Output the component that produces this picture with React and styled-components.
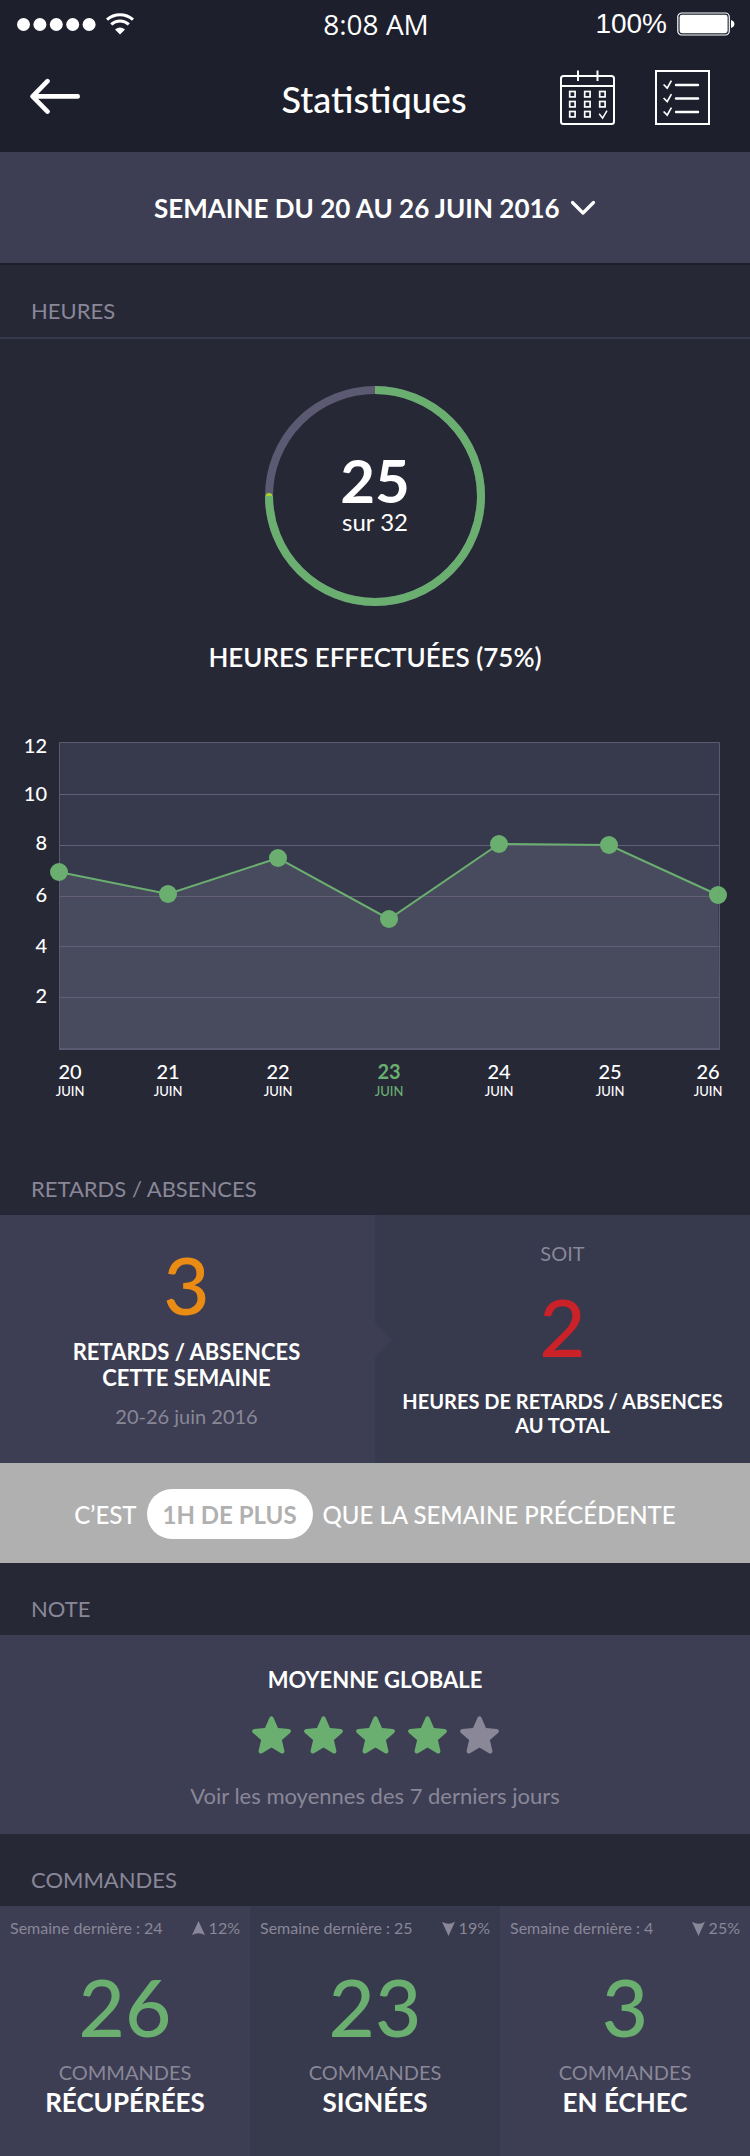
import React from "react";
import styled, { createGlobalStyle, css } from "styled-components";

const color = {
  header: "#1d202c",
  page: "#262836",
  panel: "#3d3e53",
  panelAlt: "#37394c",
  line: "#36384d",
  muted: "#898798",
  green: "#6aaf70",
  orange: "#ea8b13",
  red: "#cb2128",
  band: "#b0b0b0",
  track: "#5c5972",
  grid: "#5c5a72",
};

const GlobalStyle = createGlobalStyle`
  *, *::before, *::after { box-sizing: border-box; }
  body {
    margin: 0;
    background: ${color.page};
    color: #fff;
    font-family: Lato, "Liberation Sans", sans-serif;
  }
  h1, h2, p { margin: 0; font-weight: inherit; }
`;

const Page = styled.div`
  width: 100%;
  background: ${color.page};
`;

const Header = styled.header`
  background: ${color.header};
  padding-bottom: 4px;
`;

const StatusBar = styled.div`
  display: grid;
  grid-template-columns: 1fr auto 1fr;
  align-items: center;
  height: 48px;
  padding: 0 15px 0 17px;
`;

const StatusGroup = styled.div`
  display: flex;
  align-items: center;
  gap: 10px;
  justify-content: ${(p) => (p.$end ? "flex-end" : "flex-start")};
  font: 400 28px/32px "Liberation Sans", sans-serif;
`;

const Clock = styled.time`
  font: 500 28px/32px "Open Sans", "Liberation Sans", sans-serif;
`;

const NavBar = styled.nav`
  display: grid;
  grid-template-columns: 1fr auto 1fr;
  align-items: center;
  height: 100px;
  padding: 0 40px 0 30px;
`;

const Title = styled.h1`
  font-size: 36px;
  line-height: 44px;
  font-weight: 500;
  padding: 2px 0 0 8px;
`;

const NavActions = styled.div`
  display: flex;
  justify-content: flex-end;
  gap: 40px;
`;

const IconButton = styled.button`
  display: flex;
  justify-self: start;
  padding: 0;
  border: 0;
  background: none;
  color: inherit;
  cursor: pointer;
`;

const WeekBar = styled.div`
  display: flex;
  justify-content: center;
  padding: 38px 20px 37px;
  background: ${color.panel};
  border-bottom: 2px solid ${color.header};
`;

const WeekPicker = styled.label`
  position: relative;
  display: flex;
  align-items: center;
`;

const WeekSelect = styled.select`
  appearance: none;
  margin: 0;
  padding: 0 34px 0 0;
  border: 0;
  background: none;
  color: #fff;
  font: 700 26px/36px Lato, "Liberation Sans", sans-serif;
  height: 36px;
  cursor: pointer;
`;

const Chevron = styled.svg`
  position: absolute;
  right: 0;
  pointer-events: none;
`;

const SectionTitle = styled.h2`
  padding: 33px 31px 13px;
  color: ${color.muted};
  font-size: 22px;
  line-height: 26px;
  ${(p) => p.$ruled && css`border-bottom: 2px solid ${color.line};`}
`;

const Hours = styled.div`
  display: flex;
  flex-direction: column;
  align-items: center;
  padding: 47px 0 33px;
`;

const Ring = styled.div`
  display: grid;
  place-items: center;
  & > * { grid-area: 1 / 1; }
`;

const RingText = styled.div`
  text-align: center;
  padding-bottom: 4px;
`;

const RingValue = styled.p`
  font-size: 60px;
  line-height: 56px;
  font-weight: 700;
`;

const RingTotal = styled.p`
  font-size: 24px;
  line-height: 28px;
`;

const HoursLabel = styled.p`
  margin: 35px 0 47px;
  font-size: 26px;
  line-height: 32px;
  font-weight: 600;
`;

const Chart = styled.svg`
  display: block;
  width: 100%;
  height: auto;
  font-family: Lato, "Liberation Sans", sans-serif;
`;

const AxisText = styled.text`
  fill: ${(p) => (p.$active ? color.green : "#fff")};
  font-size: ${(p) => (p.$small ? 13 : 20)}px;
  font-weight: ${(p) => (p.$active && !p.$small ? 700 : 500)};
  text-anchor: ${(p) => (p.$end ? "end" : "middle")};
`;

const Columns = styled.div`
  display: grid;
  grid-template-columns: repeat(${(p) => p.$count}, 1fr);
`;

const Panel = styled.div`
  position: relative;
  display: flex;
  flex-direction: column;
  align-items: center;
  text-align: center;
  padding: ${(p) => p.$pad};
  background: ${(p) => (p.$alt ? color.panelAlt : color.panel)};
`;

const PanelArrow = styled.svg`
  position: absolute;
  left: 0;
  top: 108px;
`;

const BigNumber = styled.p`
  margin: ${(p) => p.$margin || 0};
  color: ${(p) => p.$color};
  font-size: 80px;
  line-height: 80px;
  font-weight: 500;
`;

const Strong = styled.p`
  font-size: ${(p) => (p.$small ? 20 : 22)}px;
  line-height: ${(p) => (p.$small ? 24 : 26)}px;
  font-weight: 700;
`;

const Muted = styled.p`
  color: ${color.muted};
  font-size: 20px;
  line-height: 24px;
`;

const Period = styled(Muted)`
  margin-top: 13px;
`;

const Band = styled.div`
  display: flex;
  align-items: baseline;
  justify-content: center;
  gap: 10px;
  padding: 26px 0 24px;
  background: ${color.band};
  font-size: 24px;
  line-height: 28px;
  font-weight: 500;
`;

const Pill = styled.strong`
  padding: 12px 16px 10px;
  border-radius: 25px;
  background: #fff;
  color: ${color.band};
  font-weight: 700;
`;

const Stars = styled.div`
  display: flex;
  gap: 13px;
  margin: 23px 0 29px;
`;

const MutedLink = styled.a`
  color: ${color.muted};
  font-size: 22px;
  line-height: 26px;
  text-decoration: none;
`;

const Compare = styled.div`
  display: flex;
  align-self: stretch;
  justify-content: space-between;
  color: ${color.muted};
  font-size: 16px;
  line-height: 20px;
`;

const Trend = styled.span`
  display: flex;
  align-items: center;
  gap: 4px;
`;

const OrderState = styled.p`
  margin-top: 2px;
  font-size: 26px;
  line-height: 32px;
  font-weight: 700;
`;

const SignalIcon = () => (
  <svg width="79" height="13" viewBox="0 0 79 13" fill="#fff" aria-hidden="true">
    {[0, 1, 2, 3, 4].map((i) => (
      <circle key={i} cx={6.5 + i * 16.4} cy="6.5" r="6.5" />
    ))}
  </svg>
);

const WifiIcon = () => (
  <svg width="28" height="22" viewBox="0 0 28 22" fill="none" stroke="#fff" strokeWidth="3" aria-hidden="true">
    <path d="M1 6.6A19.5 19.5 0 0 1 27 6.6" />
    <path d="M5.2 11.4A13 13 0 0 1 22.8 11.4" />
    <path d="M9 16.4Q14 12.6 19 16.4L14 21.6Z" fill="#fff" stroke="none" />
  </svg>
);

const BatteryIcon = () => (
  <svg width="58" height="24" viewBox="0 0 58 24" aria-hidden="true">
    <rect x="0.8" y="1" width="51.5" height="22" rx="4" fill="none" stroke="#fff" strokeWidth="1.2" />
    <rect x="2.6" y="2.8" width="48" height="18.4" rx="2.4" fill="#fff" />
    <path d="M54 8q3.4 1.2 3.4 4t-3.4 4Z" fill="#fff" />
  </svg>
);

const BackIcon = () => (
  <svg width="50" height="40" viewBox="0 0 50 40" fill="none" stroke="#fff" strokeWidth="4.6" strokeLinecap="round" strokeLinejoin="round">
    <path d="M17.5 3.2L2.6 18.4L17.5 33.6M3 18.4H47.7" />
  </svg>
);

const CalendarIcon = () => (
  <svg width="55" height="56" viewBox="0 0 55 56" fill="none" stroke="#fff" strokeWidth="2">
    <rect x="1" y="6" width="53" height="48" rx="2.5" />
    <path d="M1 16H54M18 0.5V11M37.5 0.5V11" />
    {[21.5, 31.5, 41.5].map((y, row) =>
      [9.7, 24.7, 39.7].map((x, col) =>
        row === 2 && col === 2 ? null : <rect key={x + "-" + y} x={x} y={y} width="5.4" height="5.4" strokeWidth="1.7" />
      )
    )}
    <path d="M39.2 43.8l3.4 4.4 4.4-7.6" strokeWidth="1.5" />
  </svg>
);

const ChecklistIcon = () => (
  <svg width="55" height="55" viewBox="0 0 55 55" fill="none" stroke="#fff" strokeWidth="2">
    <rect x="1" y="1" width="53" height="53" />
    {[15, 28.5, 42].map((y) => (
      <g key={y}>
        <path d={`M8.6 ${y - 0.5}l3.6 3.6 4.2-7.4`} strokeWidth="1.7" />
        <path d={`M21 ${y}H43`} strokeWidth="2.4" strokeLinecap="round" />
      </g>
    ))}
  </svg>
);

const Star = ({ on }) => (
  <svg width="39" height="38" viewBox="0 0 39 38" fill={on ? color.green : color.muted} aria-hidden="true">
    <path d="M17.6 1.6Q19.5-.9 21.4 1.6L26 12L36.8 13Q40.4 14 38 17L29.9 24L32.5 35.2Q32 38.6 28.6 36.9L19.5 31.6L10.4 36.9Q7 38.6 6.5 35.2L9.1 24L1 17Q-1.4 14 2.2 13L13 12Z" />
  </svg>
);

const TrendArrow = ({ down }) => (
  <svg width="13" height="15" viewBox="0 0 13 15" fill={color.muted} aria-hidden="true">
    <path d={down ? "M6.5 15L13 .8Q6.5 4.6 0 .8Z" : "M6.5 0L13 14.2Q6.5 10.4 0 14.2Z"} />
  </svg>
);

const axis = [
  { label: "12", y: 33 },
  { label: "10", y: 81, line: 74.5 },
  { label: "8", y: 130, line: 125.5 },
  { label: "6", y: 182, line: 176.5 },
  { label: "4", y: 233, line: 226.5 },
  { label: "2", y: 283, line: 277.5 },
];

const days = [
  { day: "20", x: 59, y: 152, labelX: 70 },
  { day: "21", x: 168, y: 174, labelX: 168 },
  { day: "22", x: 278, y: 138, labelX: 278 },
  { day: "23", x: 389, y: 199, labelX: 389, active: true },
  { day: "24", x: 499, y: 124, labelX: 499 },
  { day: "25", x: 609, y: 125, labelX: 610 },
  { day: "26", x: 718, y: 175, labelX: 708 },
];

const HoursChart = () => {
  const points = days.map((d) => `${d.x},${d.y}`).join(" ");
  return (
    <Chart viewBox="0 0 750 390" role="img" aria-label="Heures par jour">
      <rect x="59.5" y="22.5" width="660" height="307" fill={color.panelAlt} />
      <polygon points={`59,330 ${points} 720,330`} fill="#484a5d" />
      {axis.filter((a) => a.line).map((a) => (
        <path key={a.label} d={`M60 ${a.line}H719`} stroke="#625f77" />
      ))}
      <path d="M59.5 330V22.5H719.5V330" fill="none" stroke={color.grid} />
      <path d="M59 329H720" stroke={color.grid} strokeWidth="2" />
      <polyline points={points} fill="none" stroke={color.green} strokeWidth="2" />
      {axis.map((a) => (
        <AxisText key={a.label} x="47" y={a.y} $end>{a.label}</AxisText>
      ))}
      {days.map((d) => (
        <g key={d.day}>
          <circle cx={d.x} cy={d.y} r="9" fill={color.green} />
          <AxisText x={d.labelX} y="359" $active={d.active}>{d.day}</AxisText>
          <AxisText x={d.labelX} y="376" $active={d.active} $small>JUIN</AxisText>
        </g>
      ))}
    </Chart>
  );
};

const orders = [
  { last: 24, trend: "12%", value: 26, state: "RÉCUPÉRÉES" },
  { last: 25, trend: "19%", down: true, value: 23, state: "SIGNÉES" },
  { last: 4, trend: "25%", down: true, value: 3, state: "EN ÉCHEC" },
];

export default function App() {
  return (
    <Page>
      <GlobalStyle />
      <Header>
        <StatusBar>
          <StatusGroup>
            <SignalIcon />
            <WifiIcon />
          </StatusGroup>
          <Clock>8:08 AM</Clock>
          <StatusGroup $end>
            100%
            <BatteryIcon />
          </StatusGroup>
        </StatusBar>
        <NavBar>
          <IconButton type="button" aria-label="Retour"><BackIcon /></IconButton>
          <Title>Statistiques</Title>
          <NavActions>
            <IconButton type="button" aria-label="Calendrier"><CalendarIcon /></IconButton>
            <IconButton type="button" aria-label="Liste"><ChecklistIcon /></IconButton>
          </NavActions>
        </NavBar>
      </Header>

      <WeekBar>
        <WeekPicker>
          <WeekSelect aria-label="Semaine">
            <option>SEMAINE DU 20 AU 26 JUIN 2016</option>
          </WeekSelect>
          <Chevron width="26" height="16" viewBox="0 0 26 16" fill="none" stroke="#fff" strokeWidth="3.2" strokeLinecap="round" strokeLinejoin="round">
            <path d="M2.5 2.5L13 13L23.5 2.5" />
          </Chevron>
        </WeekPicker>
      </WeekBar>

      <section>
        <SectionTitle $ruled>HEURES</SectionTitle>
        <Hours>
          <Ring>
            <svg width="220" height="220" viewBox="0 0 220 220" fill="none" strokeWidth="8" aria-hidden="true">
              <circle cx="110" cy="110" r="106" stroke={color.track} />
              <ellipse cx="4" cy="110" rx="3.4" ry="3" fill="#a3cf2f" />
              <path d="M110 4A106 106 0 1 1 4 110" stroke={color.green} />
            </svg>
            <RingText>
              <RingValue>25</RingValue>
              <RingTotal>sur 32</RingTotal>
            </RingText>
          </Ring>
          <HoursLabel>HEURES EFFECTUÉES (75%)</HoursLabel>
          <HoursChart />
        </Hours>
      </section>

      <section>
        <SectionTitle>RETARDS / ABSENCES</SectionTitle>
        <Columns $count={2}>
          <Panel $pad="29px 2px 35px 0">
            <BigNumber $color={color.orange} $margin="0 0 15px">3</BigNumber>
            <Strong>RETARDS / ABSENCES<br />CETTE SEMAINE</Strong>
            <Period>20-26 juin 2016</Period>
          </Panel>
          <Panel $alt $pad="26px 0">
            <PanelArrow width="17" height="34" viewBox="0 0 17 34" aria-hidden="true">
              <path d="M0 0L17 17L0 34Z" fill={color.panel} />
            </PanelArrow>
            <Muted>SOIT</Muted>
            <BigNumber $color={color.red} $margin="21px 0 23px">2</BigNumber>
            <Strong $small>HEURES DE RETARDS / ABSENCES<br />AU TOTAL</Strong>
          </Panel>
        </Columns>
        <Band>
          <span>C’EST</span>
          <Pill>1H DE PLUS</Pill>
          <span>QUE LA SEMAINE PRÉCÉDENTE</span>
        </Band>
      </section>

      <section>
        <SectionTitle>NOTE</SectionTitle>
        <Panel $pad="32px 0 25px">
          <Strong>MOYENNE GLOBALE</Strong>
          <Stars role="img" aria-label="4 sur 5">
            {[1, 2, 3, 4, 5].map((n) => <Star key={n} on={n <= 4} />)}
          </Stars>
          <MutedLink href="#moyennes">Voir les moyennes des 7 derniers jours</MutedLink>
        </Panel>
      </section>

      <section>
        <SectionTitle>COMMANDES</SectionTitle>
        <Columns $count={3}>
          {orders.map((o, i) => (
            <Panel key={o.state} $alt={i === 1} $pad="12px 10px 38px">
              <Compare>
                <span>Semaine dernière : {o.last}</span>
                <Trend><TrendArrow down={o.down} />{o.trend}</Trend>
              </Compare>
              <BigNumber $color={color.green} $margin="28px 0 14px">{o.value}</BigNumber>
              <Muted>COMMANDES</Muted>
              <OrderState>{o.state}</OrderState>
            </Panel>
          ))}
        </Columns>
      </section>
    </Page>
  );
}
